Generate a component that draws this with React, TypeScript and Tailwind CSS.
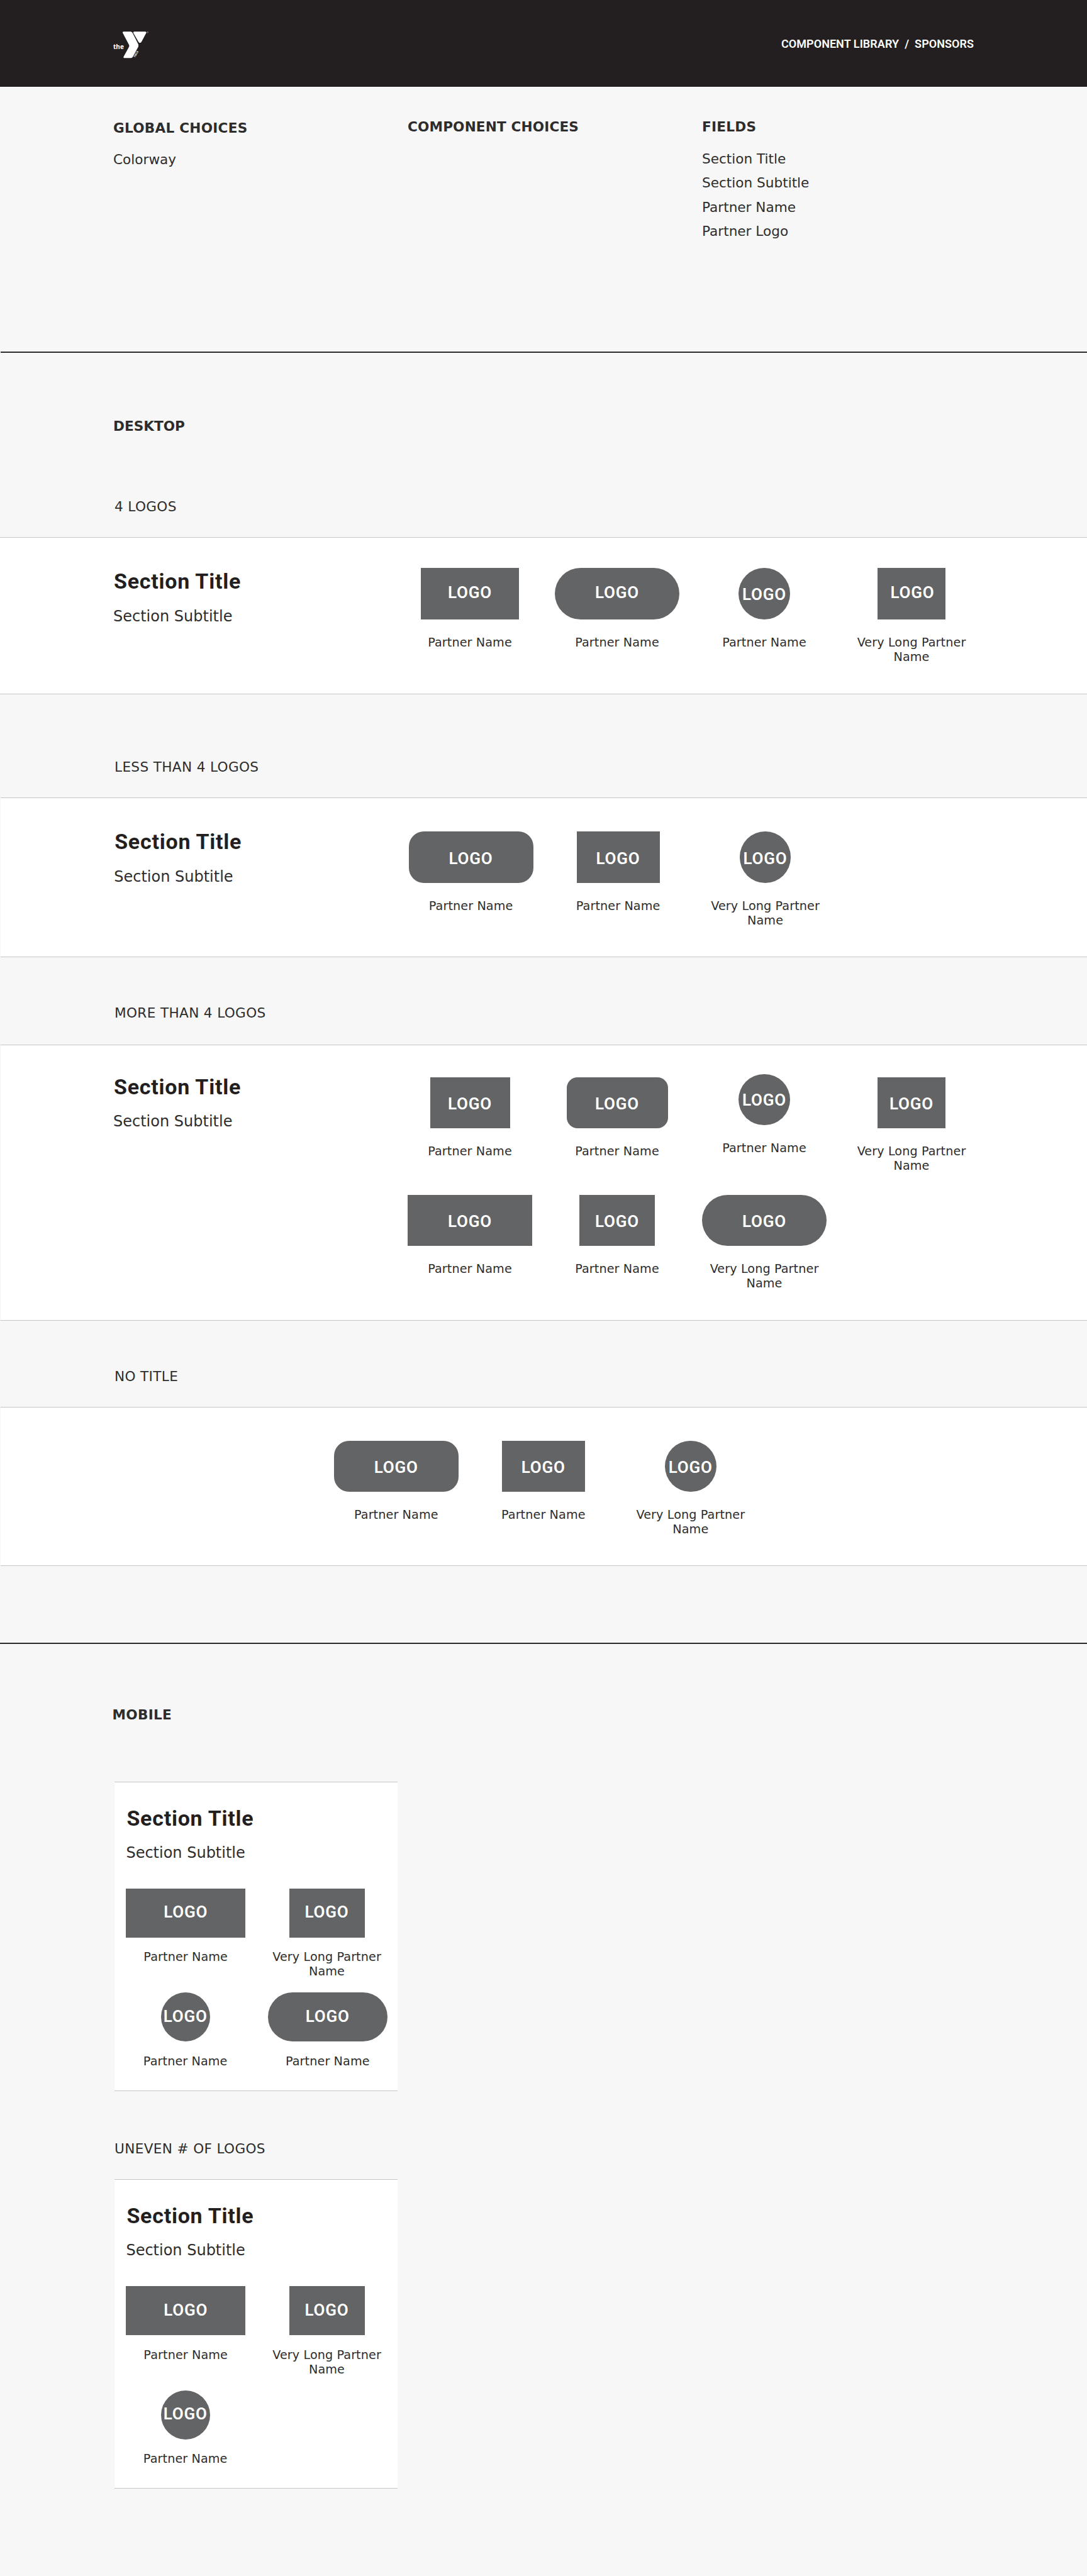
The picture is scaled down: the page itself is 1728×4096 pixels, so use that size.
import React from "react";
import clsx from "clsx";

type Partner = {
  name: string;
  shape: string;
  nudge?: string;
  lift?: string;
};

const NAME = "Partner Name";
const LONG = "Very Long Partner Name";

const bodyFont = "font-['Verdana','DejaVu_Sans',sans-serif]";
const displayFont = "font-['Roboto',sans-serif]";

function YLogo() {
  return (
    <svg viewBox="60 66 284 220" className="h-[44px] w-[56.8px] overflow-visible" fill="#fff">
      <path d="M144 72H198Q207 72 212 80L259 172Q264 184 259 193L216 272Q211 282 202 282H149Q138 282 143 271L186 192Q189 185 186 178L136 84Q132 72 144 72Z" />
      <path d="M228 72H314Q326 73 322 84L284 155Q279 162 272 162Q264 162 261 155L221 85Q216 73 228 72Z" />
      <circle cx="333" cy="78" r="4.5" fill="none" stroke="#fff" strokeWidth="2" />
      <text x="60" y="212" fontSize="52" fontWeight="700" textLength="84" lengthAdjust="spacingAndGlyphs" fontFamily="Open Sans, sans-serif">
        the
      </text>
      <text x="0" y="0" fontSize="21" fontWeight="700" textLength="54" lengthAdjust="spacingAndGlyphs" fontFamily="Open Sans, sans-serif" transform="translate(234 278) rotate(-60)">
        YMCA
      </text>
    </svg>
  );
}

function PartnerItem({ partner, mobile = false }: { partner: Partner; mobile?: boolean }) {
  return (
    <div className={clsx("flex flex-col items-center", partner.lift)}>
      <div
        className={clsx(
          "flex items-center justify-center bg-[#636466] text-[26px] leading-[30px] font-semibold tracking-[0.8px] text-white",
          displayFont,
          mobile ? "h-[78px]" : "h-[81.6px]",
          partner.shape,
          partner.nudge ?? (mobile ? "pb-[3px]" : "pt-[3px]"),
        )}
      >
        LOGO
      </div>
      <p
        className={clsx(
          "text-center text-[19.2px] leading-[23px] tracking-[0.1px]",
          mobile ? "mt-[19.5px] w-[180px]" : "mt-[25.2px] w-[190px]",
        )}
      >
        {partner.name}
      </p>
    </div>
  );
}

function SectionHeading({ className }: { className?: string }) {
  return (
    <div className={className}>
      <h2 className={clsx("pl-px text-[34px] leading-[40px] font-bold tracking-[0.75px] text-[#231f20]", displayFont)}>
        Section Title
      </h2>
      <p className="mt-[20.5px] text-[24px] leading-[30px]">Section Subtitle</p>
    </div>
  );
}

function Label({ children, className }: { children: React.ReactNode; className: string }) {
  return <p className={clsx("ml-[182px] text-[21.6px] leading-[24px] tracking-[0.35px]", className)}>{children}</p>;
}

function BoldLabel({ children, className }: { children: React.ReactNode; className: string }) {
  return <h3 className={clsx("text-[21.6px] leading-[24px] font-bold", className)}>{children}</h3>;
}

const panel = "flex border-y border-y-[#c5c5c5] bg-white";
const partnerGrid = "grid grid-cols-[repeat(4,198px)] gap-x-[36px] content-start";

const fourLogos: Partner[] = [
  { name: NAME, shape: "w-[156px]", nudge: "pb-[4px]" },
  { name: NAME, shape: "w-[198px] rounded-full", nudge: "pb-[4px]" },
  { name: NAME, shape: "w-[81.6px] rounded-full", nudge: "pt-[2px]" },
  { name: LONG, shape: "w-[108px]", nudge: "pb-[4px] pl-[3px]" },
];

const threeLogos: Partner[] = [
  { name: NAME, shape: "w-[198px] rounded-[24px]" },
  { name: NAME, shape: "w-[132px]" },
  { name: LONG, shape: "w-[81.6px] rounded-full" },
];

const manyLogos: Partner[] = [
  { name: NAME, shape: "w-[127px]" },
  { name: NAME, shape: "w-[161px] rounded-[17px]" },
  { name: NAME, shape: "w-[81.6px] rounded-full", nudge: "pt-[2px]", lift: "-mt-[5px]" },
  { name: LONG, shape: "w-[108px]" },
  { name: NAME, shape: "w-[198px]" },
  { name: NAME, shape: "w-[120px]" },
  { name: LONG, shape: "w-[198px] rounded-full" },
];

const mobileLogos: Partner[] = [
  { name: NAME, shape: "w-[189.6px]" },
  { name: LONG, shape: "w-[120px]", lift: "-ml-[2.5px]" },
  { name: NAME, shape: "w-[78px] rounded-full", nudge: "pb-[3px]", lift: "-ml-[1px]" },
  { name: NAME, shape: "w-[189.6px] rounded-full" },
];

function MobileCard({ partners, className }: { partners: Partner[]; className: string }) {
  return (
    <div className={clsx("ml-[182.4px] h-[492px] w-[450px] border-y border-[#c5c5c5] bg-white px-[18px] pt-[36.5px]", className)}>
      <SectionHeading />
      <div className="mt-[41.7px] grid grid-cols-[189.6px_189.6px] gap-x-[36px] gap-y-[22.1px]">
        {partners.map((p, i) => (
          <PartnerItem key={i} partner={p} mobile />
        ))}
      </div>
    </div>
  );
}

export default function App() {
  return (
    <div className={clsx("h-[4096px] w-[1728px] overflow-hidden bg-[#f7f7f7] text-[#2d2d2d]", bodyFont)}>
      <header className="flex h-[138px] items-start justify-between bg-[#231f20] pr-[180px] pl-[180px]">
        <div className="mt-[49.2px]">
          <YLogo />
        </div>
        <p className={clsx("mt-[59px] text-[18px] leading-[22px] font-semibold tracking-[0.05px] whitespace-pre text-white", displayFont)}>
          COMPONENT LIBRARY{"  "}/{"  "}SPONSORS
        </p>
      </header>

      <section className="grid h-[421px] grid-cols-[468px_468px_432px] pl-[180px]">
        <div className="mt-[53.5px]">
          <BoldLabel className="tracking-[0.25px]">GLOBAL CHOICES</BoldLabel>
          <p className="mt-[19.3px] text-[21.6px] leading-[38.4px]">Colorway</p>
        </div>
        <div className="mt-[52.4px]">
          <BoldLabel className="tracking-[0.15px]">COMPONENT CHOICES</BoldLabel>
        </div>
        <div className="mt-[52.4px]">
          <BoldLabel className="tracking-[0.25px]">FIELDS</BoldLabel>
          <ul className="mt-[19.3px] text-[21.6px] leading-[38.4px]">
            <li>Section Title</li>
            <li>Section Subtitle</li>
            <li>Partner Name</li>
            <li>Partner Logo</li>
          </ul>
        </div>
      </section>

      <hr className="ml-px h-[2px] border-0 bg-[#2b2b2b]" />

      <main className="flex flex-col">
        <BoldLabel className="mt-[105px] ml-[180px]">DESKTOP</BoldLabel>

        <Label className="mt-[104px]">4 LOGOS</Label>
        <div className={clsx(panel, "mt-[36.4px] h-[249.6px] pl-[180px]")}>
          <SectionHeading className="w-[468px] pt-[48.8px]" />
          <div className={clsx(partnerGrid, "pt-[48px]")}>
            {fourLogos.map((p, i) => (
              <PartnerItem key={i} partner={p} />
            ))}
          </div>
        </div>

        <Label className="mt-[104.3px]">LESS THAN 4 LOGOS</Label>
        <div className={clsx(panel, "mt-[36.1px] ml-px h-[253.2px] pl-[180.2px]")}>
          <SectionHeading className="w-[468.4px] pt-[48.8px]" />
          <div className={clsx(partnerGrid, "pt-[53px]")}>
            {threeLogos.map((p, i) => (
              <PartnerItem key={i} partner={p} />
            ))}
          </div>
        </div>

        <Label className="mt-[77.7px]">MORE THAN 4 LOGOS</Label>
        <div className={clsx(panel, "mt-[37.5px] h-[439px] border-l border-l-[#f4f4f4] pl-[179px]")}>
          <SectionHeading className="w-[468px] pt-[45.8px]" />
          <div className={clsx(partnerGrid, "gap-y-[34.3px] pt-[50.8px]")}>
            {manyLogos.map((p, i) => (
              <PartnerItem key={i} partner={p} />
            ))}
          </div>
        </div>

        <Label className="mt-[76.8px]">NO TITLE</Label>
        <div className={clsx(panel, "mt-[36px] ml-px h-[253.2px] pl-[529.8px]")}>
          <div className={clsx(partnerGrid, "pt-[53px]")}>
            {threeLogos.map((p, i) => (
              <PartnerItem key={i} partner={p} />
            ))}
          </div>
        </div>

        <hr className="mt-[122.6px] h-[2px] border-0 bg-[#2b2b2b]" />

        <BoldLabel className="mt-[100.7px] ml-[178.5px] tracking-[0.3px]">MOBILE</BoldLabel>
        <MobileCard partners={mobileLogos} className="mt-[94.1px]" />
        <Label className="mt-[80.2px]">UNEVEN # OF LOGOS</Label>
        <MobileCard partners={mobileLogos.slice(0, 3)} className="mt-[36.2px]" />
      </main>
    </div>
  );
}
